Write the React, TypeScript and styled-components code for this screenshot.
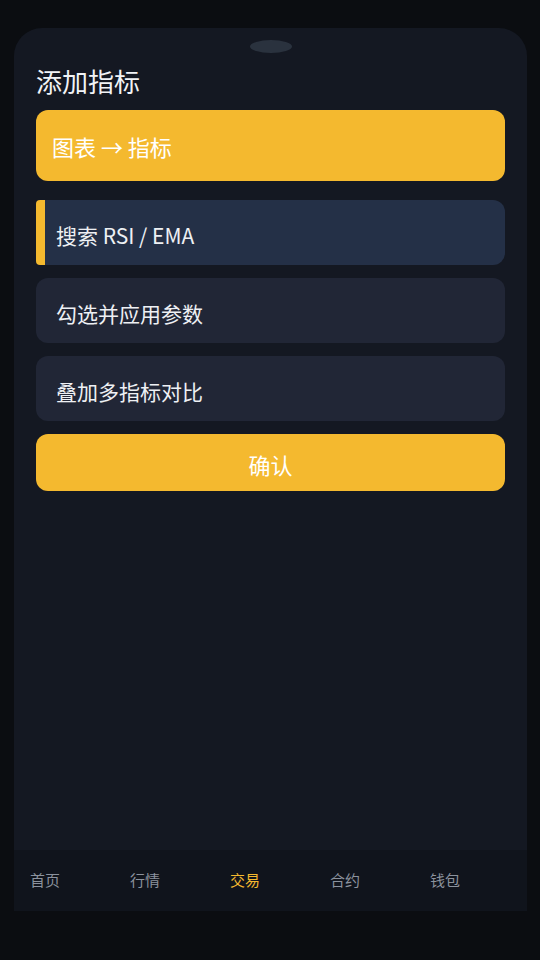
import React from 'react';
import styled, { createGlobalStyle } from 'styled-components';

const GlobalStyle = createGlobalStyle`
  html, body {
    margin: 0;
    padding: 0;
    background: #0b0d11;
  }
  body {
    font-family: "Noto Sans CJK SC", "Noto Sans", sans-serif;
    height: 960px;
  }
`;

const Page = styled.div`
  width: 540px;
  height: 960px;
  padding-top: 28px;
  box-sizing: border-box;
`;

const Phone = styled.div`
  margin-left: 14px;
  width: 513px;
  height: 883px;
  background: #141822;
  border-radius: 28px 28px 0 0;
  display: flex;
  flex-direction: column;
  overflow: hidden;
`;

const Notch = styled.div`
  align-self: center;
  width: 42px;
  height: 13px;
  margin-top: 12px;
  border-radius: 50%;
  background: #2a323e;
`;

const Content = styled.div`
  flex: 1;
  padding: 0 22px;
  display: flex;
  flex-direction: column;
`;

const Title = styled.h1`
  margin: 13px 0 14px 0;
  font-size: 26px;
  font-weight: 400;
  line-height: 30px;
  color: #f1f3f6;
`;

const HeaderCard = styled.div`
  height: 71px;
  box-sizing: border-box;
  padding: 21px 16px 19px;
  border-radius: 12px;
  background: #f4b92f;
  color: #ffffff;
  font-size: 22px;
  line-height: 31px;
  margin-bottom: 19px;
`;

const Step = styled.div<{ $active?: boolean }>`
  height: 65px;
  box-sizing: border-box;
  padding: 19px 16px 14px ${(p) => (p.$active ? '11px' : '20px')};
  border-radius: ${(p) => (p.$active ? '4px 12px 12px 4px' : '12px')};
  background: ${(p) => (p.$active ? '#243047' : '#212636')};
  border-left: ${(p) => (p.$active ? '9px solid #f4b92f' : 'none')};
  color: #eef0f4;
  font-size: 21px;
  line-height: 32px;
  margin-bottom: 13px;
`;

const ConfirmButton = styled.button`
  height: 57px;
  padding: 14px 0 11px;
  border: none;
  border-radius: 12px;
  background: #f4b92f;
  color: #ffffff;
  font-family: inherit;
  font-size: 22px;
  line-height: 32px;
  text-align: center;
`;

const Nav = styled.nav`
  height: 61px;
  box-sizing: border-box;
  padding: 0 0 2px 16px;
  background: #10141c;
  display: grid;
  grid-template-columns: repeat(5, 100px);
  align-items: center;
`;

const NavItem = styled.span<{ $active?: boolean }>`
  font-size: 15px;
  line-height: 20px;
  color: ${(p) => (p.$active ? '#f4b92f' : '#8b929d')};
`;

const steps = ['搜索 RSI / EMA', '勾选并应用参数', '叠加多指标对比'];
const tabs = ['首页', '行情', '交易', '合约', '钱包'];

export default function App() {
  return (
    <Page>
      <GlobalStyle />
      <Phone>
        <Notch />
        <Content>
          <Title>添加指标</Title>
          <HeaderCard>图表 → 指标</HeaderCard>
          {steps.map((s, i) => (
            <Step key={s} $active={i === 0}>
              {s}
            </Step>
          ))}
          <ConfirmButton>确认</ConfirmButton>
        </Content>
        <Nav>
          {tabs.map((t) => (
            <NavItem key={t} $active={t === '交易'}>
              {t}
            </NavItem>
          ))}
        </Nav>
      </Phone>
    </Page>
  );
}
